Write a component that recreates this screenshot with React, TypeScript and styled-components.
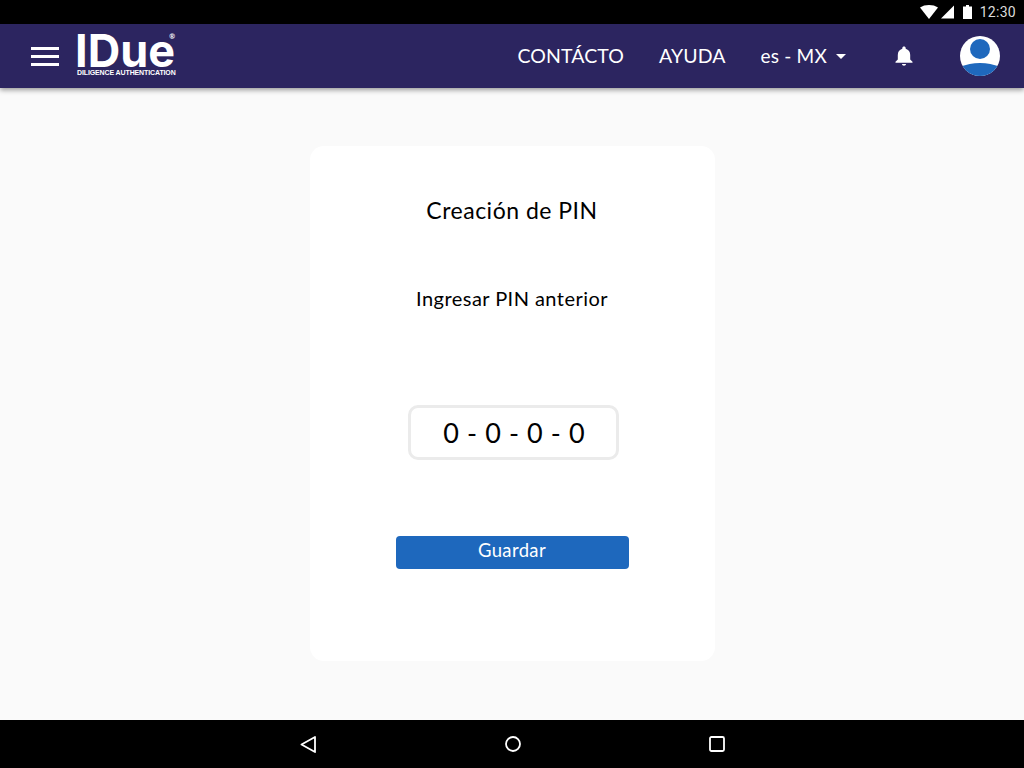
import React from "react";
import styled, { createGlobalStyle } from "styled-components";

const GlobalStyle = createGlobalStyle`
  html, body {
    margin: 0;
    padding: 0;
    background: #000;
  }
  * {
    box-sizing: border-box;
  }
`;

const Screen = styled.div`
  width: 1024px;
  height: 768px;
  display: flex;
  flex-direction: column;
  overflow: hidden;
  font-family: "Lato", "Liberation Sans", sans-serif;
`;

const StatusBar = styled.div`
  height: 24px;
  flex: none;
  background: #000;
  display: flex;
  align-items: center;
  justify-content: flex-end;
  padding-right: 8px;
`;

const StatusIcon = styled.svg<{ $gap: number }>`
  display: block;
  margin-right: ${(p) => p.$gap}px;
`;

const StatusTime = styled.span`
  font-family: "Roboto", sans-serif;
  font-size: 14px;
  letter-spacing: 0.3px;
  color: #dcdcdc;
`;

const Header = styled.header`
  height: 64px;
  flex: none;
  background: #2c2560;
  display: flex;
  align-items: center;
  padding: 0 24px 0 31px;
  box-shadow: 0 2px 5px rgba(0, 0, 0, 0.4);
  position: relative;
  z-index: 1;
`;

const Burger = styled.div`
  width: 28px;
  height: 19px;
  display: flex;
  flex-direction: column;
  justify-content: space-between;
  margin-right: 18px;
  margin-top: 1px;

  span {
    display: block;
    height: 3px;
    background: #fff;
  }
`;

const Logo = styled.div`
  width: 98px;
  margin-top: -2px;
  display: flex;
  flex-direction: column;
  color: #fff;
  position: relative;
`;

const LogoName = styled.div`
  font-family: "Inter", sans-serif;
  font-weight: 700;
  font-size: 45px;
  line-height: 36px;
  letter-spacing: 0;
  margin-left: -2px;
  white-space: nowrap;
`;

const LogoMark = styled.span`
  position: absolute;
  top: -1px;
  right: 0;
  font-size: 7px;
  line-height: 8px;
  font-weight: 700;
`;

const LogoTag = styled.div`
  font-family: "Liberation Sans", sans-serif;
  font-size: 7px;
  line-height: 8px;
  font-weight: 700;
  white-space: nowrap;
  letter-spacing: -0.12px;
`;

const Nav = styled.nav`
  margin-left: auto;
  display: flex;
  align-items: center;
  color: #fff;
`;

const NavLink = styled.a<{ $gap: number }>`
  font-size: 19.5px;
  line-height: 24px;
  letter-spacing: 0.1px;
  margin-right: ${(p) => p.$gap}px;
`;

const Language = styled.div`
  display: flex;
  align-items: center;
  font-size: 19px;
  line-height: 24px;
  letter-spacing: 0.2px;
  margin-right: 48px;
`;

const Caret = styled.span`
  width: 0;
  height: 0;
  margin-left: 9px;
  border-left: 5px solid transparent;
  border-right: 5px solid transparent;
  border-top: 5px solid #fff;
`;

const BellIcon = styled.svg`
  display: block;
  margin-right: 46px;
`;

const Avatar = styled.svg`
  display: block;
`;

const Main = styled.main`
  flex: 1;
  background: #fafafa;
  padding-top: 58px;
`;

const Card = styled.section`
  width: 405px;
  height: 515px;
  margin: 0 auto;
  background: #fff;
  border-radius: 14px;
  display: flex;
  flex-direction: column;
  align-items: center;
  color: #000;
`;

const Title = styled.h1`
  margin: 50px 0 0;
  font-size: 23px;
  line-height: 28px;
  font-weight: 400;
  letter-spacing: 0.5px;
`;

const Subtitle = styled.p`
  margin: 61px 0 0;
  font-size: 20px;
  line-height: 26px;
  letter-spacing: 0.45px;
`;

const PinBox = styled.div`
  width: 211px;
  height: 55px;
  margin-top: 94px;
  margin-left: 2px;
  padding-left: 2px;
  border: 3px solid #ebebeb;
  border-radius: 10px;
  display: flex;
  align-items: center;
  justify-content: center;
  font-size: 27px;
  letter-spacing: 0.1px;
  word-spacing: 1px;
`;

const SaveButton = styled.button`
  width: 233px;
  height: 33px;
  margin-top: 76px;
  padding: 0 0 5px;
  border: none;
  border-radius: 4px;
  background: #1e68bd;
  color: #fff;
  font-family: inherit;
  font-size: 18.5px;
  letter-spacing: 0.35px;
`;

const NavBar = styled.div`
  height: 48px;
  flex: none;
  background: #000;
  display: flex;
  align-items: center;
  padding-left: 300px;
`;

const NavIcon = styled.svg<{ $gap: number }>`
  display: block;
  margin-right: ${(p) => p.$gap}px;
`;

export default function App() {
  return (
    <Screen>
      <GlobalStyle />
      <StatusBar>
        <StatusIcon $gap={3} width="18" height="14" viewBox="0 0 18 14">
          <path d="M0 2.5C2.5 .8 5.6 0 9 0s6.500 .8 9 2.500L9 14z" fill="#fff" />
        </StatusIcon>
        <StatusIcon $gap={9} width="13" height="14" viewBox="0 0 13 14">
          <path d="M13 .5V13.500H0z" fill="#fff" />
        </StatusIcon>
        <StatusIcon $gap={8} width="9" height="14" viewBox="0 0 9 14">
          <path d="M3 0h3v1.500h3V14H0V1.500h3z" fill="#fff" />
        </StatusIcon>
        <StatusTime>12:30</StatusTime>
      </StatusBar>
      <Header>
        <Burger>
          <span />
          <span />
          <span />
        </Burger>
        <Logo>
          <LogoName>IDue</LogoName>
          <LogoMark>®</LogoMark>
          <LogoTag>DILIGENCE AUTHENTICATION</LogoTag>
        </Logo>
        <Nav>
          <NavLink $gap={35}>CONTÁCTO</NavLink>
          <NavLink $gap={35}>AYUDA</NavLink>
          <Language>
            es - MX
            <Caret />
          </Language>
          <BellIcon width="20" height="20" viewBox="0 0 20 20">
            <path
              d="M10 0.500c1 0 1.700 .7 1.700 1.700v.6c2.900 .8 4.500 3.200 4.500 6.200v4.500l2.300 2.300v.9H1.500v-.9l2.300-2.300V9c0-3 1.600-5.400 4.500-6.200v-.6c0-1 .7-1.700 1.700-1.700zM8 18h4c0 1-.9 1.700-2 1.700S8 19 8 18z"
              fill="#fff"
            />
          </BellIcon>
          <Avatar width="40" height="40" viewBox="0 0 40 40">
            <defs>
              <clipPath id="avatar-clip">
                <circle cx="20" cy="20" r="20" />
              </clipPath>
            </defs>
            <circle cx="20" cy="20" r="20" fill="#fff" />
            <g clipPath="url(#avatar-clip)">
              <circle cx="20" cy="13" r="10" fill="#1e68bd" />
              <ellipse cx="20" cy="40" rx="27" ry="13" fill="#1e68bd" />
            </g>
          </Avatar>
        </Nav>
      </Header>
      <Main>
        <Card>
          <Title>Creación de PIN</Title>
          <Subtitle>Ingresar PIN anterior</Subtitle>
          <PinBox>0 - 0 - 0 - 0</PinBox>
          <SaveButton>Guardar</SaveButton>
        </Card>
      </Main>
      <NavBar>
        <NavIcon $gap={189} width="16" height="17" viewBox="0 0 16 17">
          <path d="M15 1L1.500 8.500 15 16z" fill="none" stroke="#fff" strokeWidth="1.800" strokeLinejoin="round" />
        </NavIcon>
        <NavIcon $gap={188} width="16" height="16" viewBox="0 0 16 16">
          <circle cx="8" cy="8" r="7" fill="none" stroke="#fff" strokeWidth="1.800" />
        </NavIcon>
        <NavIcon $gap={0} width="16" height="16" viewBox="0 0 16 16">
          <rect x="1" y="1" width="14" height="14" rx="1.500" fill="none" stroke="#fff" strokeWidth="1.800" />
        </NavIcon>
      </NavBar>
    </Screen>
  );
}
